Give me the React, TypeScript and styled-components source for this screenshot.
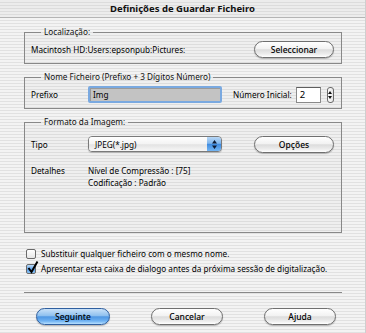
import React from "react";
import styled, { createGlobalStyle } from "styled-components";

const Global = createGlobalStyle`
  html, body { margin: 0; padding: 0; }
  body { width: 366px; height: 333px; overflow: hidden; }
`;

const FONT = `"Noto Sans", "DejaVu Sans", Arial, sans-serif`;

const Window = styled.div`
  width: 366px;
  height: 333px;
  box-sizing: border-box;
  display: flex;
  flex-direction: column;
  font-family: ${FONT};
  font-size: 8.2px;
  color: #000;
  border-right: 1px solid #cfcfcf;
  background: repeating-linear-gradient(
    to bottom,
    #f3f3f3 0px,
    #f3f3f3 2px,
    #e1e1e1 2px,
    #e1e1e1 3px
  );
`;

const TitleBar = styled.div`
  height: 17px;
  border-bottom: 1px solid #b4b4b4;
  display: flex;
  align-items: center;
  justify-content: center;
  font-weight: 700;
  font-size: 9.5px;
  color: #111;
  background: repeating-linear-gradient(
    to bottom,
    #ececec 0px,
    #ececec 2px,
    #dcdcdc 2px,
    #dcdcdc 3px
  );
`;

const Body = styled.div`
  display: flex;
  flex-direction: column;
  padding: 8px 23px 0 24px;
`;

const Group = styled.fieldset<{ $pt: number; $pb: number; $mt?: number }>`
  margin: ${(p) => p.$mt ?? 0}px 0 0 0;
  padding: ${(p) => p.$pt}px 7px ${(p) => p.$pb}px 6px;
  border: 1px solid #888888;
  min-width: 0;
  background: rgba(0, 0, 0, 0.015);
`;

const Legend = styled.legend`
  margin-left: 10px;
  padding: 0 3px;
  line-height: 12px;
  color: #111;
`;

const Row = styled.div<{ $h?: number }>`
  display: flex;
  align-items: center;
  height: ${(p) => p.$h ?? 17}px;
`;

const SpreadRow = styled(Row)`
  justify-content: space-between;
`;

const Label = styled.span`
  width: 57px;
  flex: none;
`;

const PlainText = styled.span`
  white-space: nowrap;
`;

const Grow = styled.div`
  flex: 1;
`;

const AquaButton = styled.button<{ $w: number; $default?: boolean }>`
  width: ${(p) => p.$w}px;
  height: 17px;
  box-sizing: border-box;
  padding: 0;
  border-radius: 9px;
  font-family: ${FONT};
  font-size: 8.5px;
  font-weight: 500;
  color: #000;
  flex: none;
  border: 1px solid ${(p) => (p.$default ? "#2f5f9f" : "#6f6f6f")};
  box-shadow: 0 1px 1px rgba(0, 0, 0, 0.25);
  background: ${(p) =>
    p.$default
      ? "linear-gradient(to bottom, #c9e1f8 0%, #8ec0ef 45%, #4f97e3 52%, #6fb2f2 80%, #b7e0ff 100%)"
      : "linear-gradient(to bottom, #ffffff 0%, #f2f2f2 45%, #dcdcdc 52%, #ececec 80%, #ffffff 100%)"};
`;

const TextField = styled.div`
  width: 134px;
  height: 17px;
  box-sizing: border-box;
  flex: none;
  border: 2px solid #7aa9e0;
  border-radius: 2px;
  background: #c3c3c3;
  display: flex;
  align-items: center;
  padding-left: 3px;
  box-shadow: inset 1px 1px 0 #9a9a9a;
`;

const NumberLabel = styled.span`
  margin-left: 11px;
  white-space: nowrap;
`;

const NumberField = styled.div`
  margin-left: 4px;
  width: 28px;
  height: 16px;
  box-sizing: border-box;
  border: 1px solid #8a8a8a;
  border-top-color: #5e5e5e;
  background: #fff;
  display: flex;
  align-items: center;
  padding-left: 3px;
  font-size: 9.5px;
`;

const Stepper = styled.div`
  margin-left: 6px;
  width: 8px;
  height: 16px;
  box-sizing: border-box;
  border: 1px solid #6a6a6a;
  border-radius: 3px;
  background: linear-gradient(to right, #ffffff, #e4e4e4);
  display: flex;
  flex-direction: column;
  align-items: center;
  justify-content: space-around;
  padding: 2px 0;
`;

const Popup = styled.div`
  width: 134px;
  height: 16px;
  box-sizing: border-box;
  flex: none;
  border: 1px solid #7a7a7a;
  border-radius: 4px;
  display: flex;
  overflow: hidden;
  box-shadow: 0 1px 1px rgba(0, 0, 0, 0.2);
`;

const PopupText = styled.div`
  flex: 1;
  display: flex;
  align-items: center;
  padding-left: 6px;
  background: linear-gradient(to bottom, #ffffff 0%, #f3f3f3 50%, #e3e3e3 55%, #f7f7f7 100%);
`;

const PopupArrow = styled.div`
  width: 14px;
  display: flex;
  align-items: center;
  justify-content: center;
  background: linear-gradient(to bottom, #b9d8f6 0%, #7fb5ec 45%, #3f8be0 52%, #74b6f3 100%);
`;

const DetailsRow = styled.div`
  display: flex;
  margin-top: 13px;
  line-height: 12px;
`;

const DetailsText = styled.div`
  display: flex;
  flex-direction: column;
`;

const Spacer = styled.div<{ $h: number }>`
  height: ${(p) => p.$h}px;
`;

const CheckRow = styled.label`
  display: flex;
  align-items: center;
  height: 15px;
  padding-left: 2px;
  gap: 5px;
  white-space: nowrap;
`;

const Box = styled.span<{ $checked?: boolean }>`
  position: relative;
  width: 10px;
  height: 10px;
  box-sizing: border-box;
  flex: none;
  border: 1px solid #6a6a6a;
  border-radius: 2px;
  background: ${(p) =>
    p.$checked
      ? "linear-gradient(to bottom, #bcdcfa, #5c9fe6 55%, #8cc4f6)"
      : "linear-gradient(to bottom, #ffffff, #e6e6e6)"};
`;

const CheckMark = styled.svg`
  position: absolute;
  left: 0px;
  top: -4px;
`;

const Separator = styled.div`
  margin-top: 16px;
  height: 1px;
  background: #888888;
`;

const ButtonBar = styled.div`
  display: flex;
  margin-top: 15px;
  padding-left: 12px;
  gap: 41px;
`;

export default function App() {
  return (
    <>
      <Global />
      <Window>
        <TitleBar>Definições de Guardar Ficheiro</TitleBar>
        <Body>
          <Group $pt={3} $pb={5}>
            <Legend>Localização:</Legend>
            <SpreadRow>
              <PlainText>Macintosh HD:Users:epsonpub:Pictures:</PlainText>
              <AquaButton $w={80}>Seleccionar</AquaButton>
            </SpreadRow>
          </Group>

          <Group $pt={3} $pb={5} $mt={7}>
            <Legend>Nome Ficheiro (Prefixo + 3 Dígitos Número)</Legend>
            <Row>
              <Label>Prefixo</Label>
              <TextField>Img</TextField>
              <NumberLabel>Número Inicial:</NumberLabel>
              <NumberField>2</NumberField>
              <Stepper>
                <svg width="4" height="3" viewBox="0 0 4 3">
                  <path d="M2 0 L4 3 L0 3 Z" fill="#111" />
                </svg>
                <svg width="4" height="3" viewBox="0 0 4 3">
                  <path d="M0 0 L4 0 L2 3 Z" fill="#111" />
                </svg>
              </Stepper>
            </Row>
          </Group>

          <Group $pt={8} $pb={43} $mt={7}>
            <Legend>Formato da Imagem:</Legend>
            <Row $h={16}>
              <Label>Tipo</Label>
              <Popup>
                <PopupText>JPEG(*.jpg)</PopupText>
                <PopupArrow>
                  <svg width="5" height="9" viewBox="0 0 5 9">
                    <path d="M2.5 0 L5 3.5 L0 3.5 Z" fill="#0d1a33" />
                    <path d="M0 5.5 L5 5.5 L2.5 9 Z" fill="#0d1a33" />
                  </svg>
                </PopupArrow>
              </Popup>
              <Grow />
              <AquaButton $w={80}>Opções</AquaButton>
            </Row>
            <DetailsRow>
              <Label>Detalhes</Label>
              <DetailsText>
                <span>Nível de Compressão : [75]</span>
                <span>Codificação : Padrão</span>
              </DetailsText>
            </DetailsRow>
          </Group>

          <Spacer $h={13} />
          <CheckRow>
            <Box />
            Substituir qualquer ficheiro com o mesmo nome.
          </CheckRow>
          <CheckRow>
            <Box $checked>
              <CheckMark width="12" height="13" viewBox="0 0 12 13">
                <path
                  d="M1.5 7 L4.5 11 L10.5 0.5"
                  fill="none"
                  stroke="#000"
                  strokeWidth="2"
                />
              </CheckMark>
            </Box>
            Apresentar esta caixa de dialogo antes da próxima sessão de digitalização.
          </CheckRow>
          <Separator />
          <ButtonBar>
            <AquaButton $w={74} $default>
              Seguinte
            </AquaButton>
            <AquaButton $w={72}>Cancelar</AquaButton>
            <AquaButton $w={72}>Ajuda</AquaButton>
          </ButtonBar>
        </Body>
      </Window>
    </>
  );
}
